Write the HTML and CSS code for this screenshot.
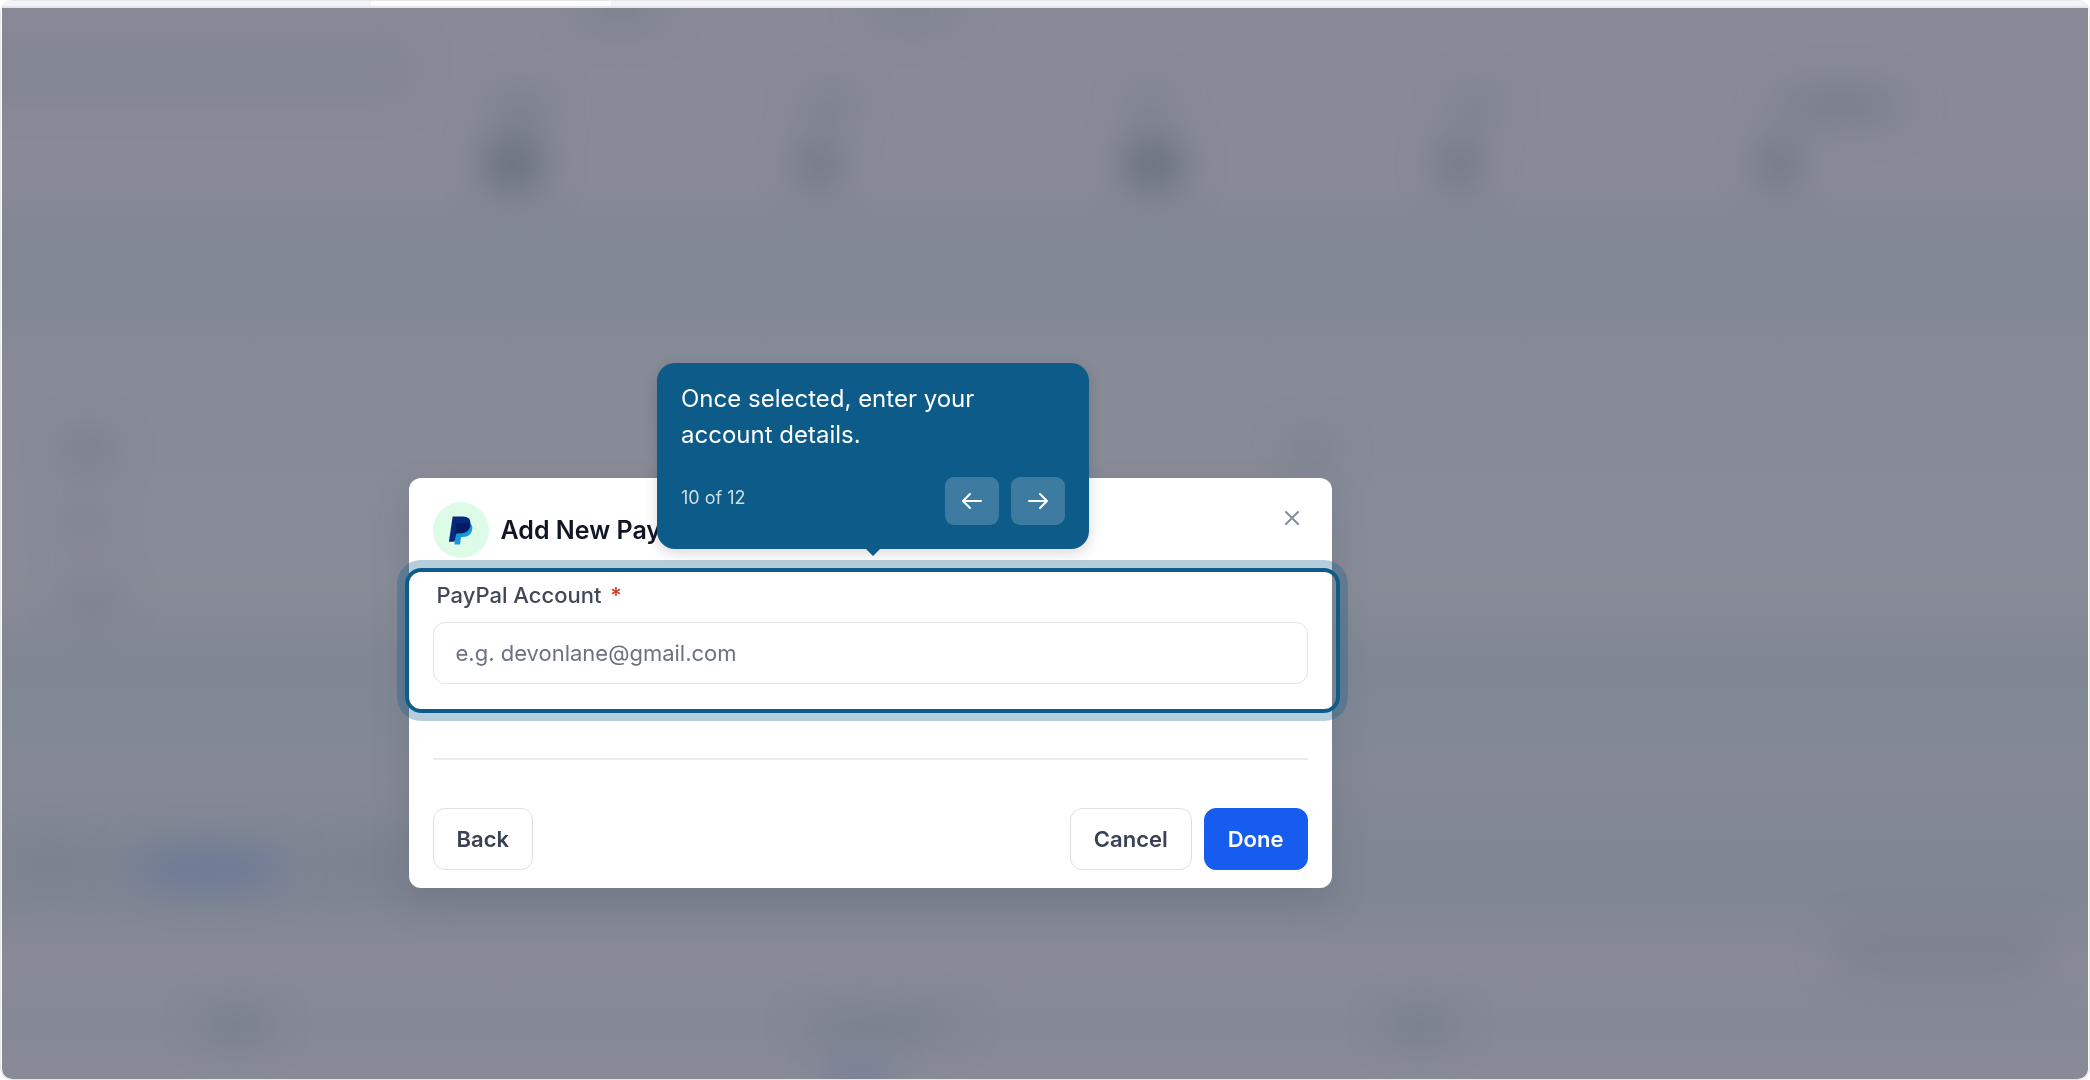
FILE: index.html
```html
<!DOCTYPE html>
<html lang="en">
<head>
    <meta charset="UTF-8">
    <meta name="viewport" content="width=device-width, initial-scale=1.0">
    <title>Add New PayPal Account</title>
    <link rel="stylesheet" href="styles.css">
</head>
<body>
    <div class="frame">
        <div class="tabs"><div class="tab-active"></div></div>
        <main class="stage">
            <!-- blurred page behind the dialog -->
            <svg class="backdrop" viewBox="0 -3 2086 1071" preserveAspectRatio="none" aria-hidden="true">
                <defs>
                    <linearGradient id="bands" x1="0" y1="0" x2="0" y2="1">
                        <stop offset="0" stop-color="#888b97"/>
                        <stop offset="0.16" stop-color="#888b97"/>
                        <stop offset="0.22" stop-color="#818794"/>
                        <stop offset="0.28" stop-color="#828895"/>
                        <stop offset="0.34" stop-color="#878b97"/>
                        <stop offset="0.54" stop-color="#888c97"/>
                        <stop offset="0.61" stop-color="#808693"/>
                        <stop offset="0.66" stop-color="#818895"/>
                        <stop offset="0.72" stop-color="#858996"/>
                        <stop offset="0.79" stop-color="#808693"/>
                        <stop offset="0.83" stop-color="#808693"/>
                        <stop offset="0.89" stop-color="#888b97"/>
                        <stop offset="0.95" stop-color="#848996"/>
                        <stop offset="1" stop-color="#888b97"/>
                    </linearGradient>
                    <filter id="soft" x="-100%" y="-100%" width="300%" height="300%" color-interpolation-filters="sRGB">
                        <feGaussianBlur stdDeviation="20"/>
                    </filter>
                </defs>
                <rect y="-3" width="2086" height="1071" fill="url(#bands)"/>
                <g fill="#5a6474" filter="url(#soft)">
                    <rect x="-40" y="28" width="450" height="60" opacity="0.12"/>
                    <ellipse cx="618" cy="0" rx="50" ry="14" opacity="0.3"/>
                    <ellipse cx="911" cy="0" rx="50" ry="12" opacity="0.3"/>
                    <ellipse cx="520" cy="96" rx="34" ry="16" opacity="0.35"/>
                    <ellipse cx="511" cy="153" rx="30" ry="26" opacity="0.8"/>
                    <ellipse cx="828" cy="92" rx="28" ry="14" opacity="0.35"/>
                    <ellipse cx="816" cy="153" rx="20" ry="26" opacity="0.6"/>
                    <ellipse cx="1148" cy="92" rx="22" ry="14" opacity="0.35"/>
                    <ellipse cx="1151" cy="153" rx="30" ry="26" opacity="0.8"/>
                    <ellipse cx="1474" cy="92" rx="26" ry="14" opacity="0.35"/>
                    <ellipse cx="1457" cy="153" rx="20" ry="26" opacity="0.6"/>
                    <ellipse cx="1838" cy="94" rx="70" ry="16" opacity="0.4"/>
                    <ellipse cx="1776" cy="153" rx="20" ry="26" opacity="0.6"/>
                    <ellipse cx="86" cy="440" rx="28" ry="18" opacity="0.35"/>
                    <ellipse cx="82" cy="512" rx="24" ry="16" opacity="0.25"/>
                    <ellipse cx="90" cy="586" rx="30" ry="16" opacity="0.3"/>
                    <ellipse cx="1310" cy="440" rx="24" ry="16" opacity="0.35"/>
                    <ellipse cx="50" cy="852" rx="50" ry="16" opacity="0.18"/>
                    <ellipse cx="370" cy="852" rx="50" ry="16" opacity="0.18"/>
                    <ellipse cx="234" cy="1014" rx="36" ry="14" opacity="0.4"/>
                    <ellipse cx="880" cy="1014" rx="84" ry="14" opacity="0.3"/>
                    <ellipse cx="1418" cy="1014" rx="36" ry="14" opacity="0.4"/>
                    <rect x="1830" y="920" width="220" height="44" rx="20" opacity="0.24"/>
                </g>
                <g fill="#4e649c" filter="url(#soft)">
                    <ellipse cx="206" cy="857" rx="84" ry="18" opacity="0.46"/>
                    <ellipse cx="855" cy="1068" rx="34" ry="12" opacity="0.5"/>
                </g>
            </svg>

            <form class="modal" onsubmit="return false">
                <div class="modal-header">
                    <span class="logo">
                        <svg width="26" height="31" viewBox="0 0 28 32" aria-hidden="true">
                            <path d="M9 7h12c4 1 6 4 5 8-1 6-5 8-10 8h-2l-1 8H7z" fill="#1597dc"/>
                            <path d="M5 1h11c6 0 9 3 8 9-1 6-5 9-11 9H9l-2 9H1z" fill="#06297a"/>
                            <path d="M9 8h14c1 1 1 2 1 3-1 5-5 8-11 8H9l-1 4z" fill="#061c60"/>
                        </svg>
                    </span>
                    <h1 class="title">Add New PayPal Account</h1>
                    <button type="button" class="close" aria-label="Close">
                        <svg width="14" height="14" viewBox="0 0 14 14" aria-hidden="true">
                            <path d="M1 1l12 12M13 1L1 13" stroke="#868d98" stroke-width="2" stroke-linecap="round"/>
                        </svg>
                    </button>
                </div>

                <div class="field">
                    <label for="paypal">PayPal Account <span class="required">*</span></label>
                    <input type="email" id="paypal" placeholder="e.g. devonlane@gmail.com" required>

                    <div class="spotlight"></div>
                    <div class="tour">
                        <p class="tour-text">Once selected, enter your account details.</p>
                        <div class="tour-footer">
                            <span class="tour-count">10 of 12</span>
                            <button type="button" class="tour-button" aria-label="Previous step">
                                <svg width="20" height="18" viewBox="0 0 20 18" aria-hidden="true">
                                    <path d="M19 9H1M8 2L1 9l7 7"/>
                                </svg>
                            </button>
                            <button type="button" class="tour-button" aria-label="Next step">
                                <svg width="20" height="18" viewBox="0 0 20 18" aria-hidden="true">
                                    <path d="M1 9h18M12 2l7 7-7 7"/>
                                </svg>
                            </button>
                        </div>
                    </div>
                </div>

                <hr class="divider">

                <div class="actions">
                    <button type="button" class="button back">Back</button>
                    <button type="button" class="button">Cancel</button>
                    <button type="submit" class="button primary">Done</button>
                </div>
            </form>
        </main>
    </div>
</body>
</html>
```

FILE: styles.css
```css
* {
    box-sizing: border-box;
}

body {
    margin: 0;
    background-color: #ffffff;
    font-family: Inter, "Liberation Sans", sans-serif;
}

button, input {
    font-family: inherit;
}

.frame {
    display: flex;
    flex-direction: column;
    min-height: 100vh;
    padding: 0 1px;
    border: 1px solid #e5e7eb;
    border-radius: 12px;
    overflow: hidden;
}

.tabs {
    height: 7px;
    background-color: #f3f4f6;
    border-bottom: 2px solid #e3e5ea;
}

.tab-active {
    width: 240px;
    height: 5px;
    margin-left: 369px;
    background-color: #ffffff;
}

.stage {
    position: relative;
    flex: 1;
    display: flex;
    justify-content: center;
    align-items: flex-start;
    padding: 470px 350px 24px 0;
    border-radius: 0 0 10px 10px;
    overflow: hidden;
}

.backdrop {
    position: absolute;
    inset: 0;
    width: 100%;
    height: 100%;
}

/* dialog */
.modal {
    position: relative;
    width: 100%;
    max-width: 923px;
    padding: 24px 24px 18px;
    background-color: #ffffff;
    border-radius: 12px;
    box-shadow: 0 16px 36px rgba(70, 78, 100, 0.24);
}

.modal-header {
    display: flex;
    align-items: center;
    gap: 12px;
}

.logo {
    display: flex;
    align-items: center;
    justify-content: center;
    width: 56px;
    height: 56px;
    border-radius: 50%;
    background-color: #dcfce7;
}

.title {
    flex: 1;
    margin: 0;
    font-size: 25px;
    line-height: 32px;
    font-weight: 600;
    color: #101525;
}

.close {
    display: flex;
    align-self: flex-start;
    padding: 9px;
    background: none;
    border: none;
    cursor: pointer;
}

/* field */
.field {
    position: relative;
    padding: 23px 0 24px;
}

.field label {
    display: block;
    margin-bottom: 13px;
    padding-left: 4px;
    font-size: 22px;
    line-height: 28px;
    font-weight: 500;
    color: #414857;
}

.required {
    margin-left: 3px;
    color: #d13a2c;
}

.field input {
    display: block;
    width: 100%;
    height: 62px;
    padding: 0 22px;
    border: 1px solid #e2e3e6;
    border-radius: 12px;
    background-color: #ffffff;
    font-size: 22px;
    color: #101525;
}

.field input::placeholder {
    color: #6b7280;
    opacity: 1;
}

.divider {
    height: 2px;
    margin: 50px 0 48px;
    border: none;
    background-color: #ececee;
}

.actions {
    display: flex;
    gap: 12px;
}

.button {
    height: 62px;
    padding: 0 23px;
    border: 1px solid #dfe0e4;
    border-radius: 12px;
    background-color: #ffffff;
    font-size: 22px;
    font-weight: 600;
    color: #384254;
    cursor: pointer;
}

.back {
    margin-right: auto;
}

.primary {
    background-color: #165cee;
    border-color: #165cee;
    color: #ffffff;
}

/* product tour */
.spotlight {
    position: absolute;
    inset: 10px -32px -5px -28px;
    border: 4px solid #0d5c8a;
    border-radius: 16px;
    box-shadow: 0 0 0 8px rgba(13, 92, 138, 0.3);
    pointer-events: none;
}

.tour {
    position: absolute;
    bottom: calc(100% + 9px);
    left: calc(50% - 213px);
    width: 432px;
    padding: 18px 24px 24px;
    border-radius: 18px;
    background-color: #0d5b89;
    box-shadow: 0 4px 14px rgba(0, 0, 0, 0.16);
    color: #ffffff;
}

.tour::after {
    content: "";
    position: absolute;
    top: 100%;
    left: calc(50% - 7px);
    border: 7px solid transparent;
    border-top-color: #0d5b89;
    border-bottom: none;
}

.tour-text {
    margin: 0 0 24px;
    font-size: 24px;
    line-height: 36px;
}

.tour-footer {
    display: flex;
    gap: 12px;
}

.tour-count {
    flex: 1;
    font-size: 18px;
    line-height: 42px;
    color: #cfdfe8;
}

.tour-button {
    display: flex;
    align-items: center;
    justify-content: center;
    width: 54px;
    height: 48px;
    padding: 0;
    border: none;
    border-radius: 9px;
    background-color: rgba(255, 255, 255, 0.2);
    cursor: pointer;
}

.tour-button path {
    fill: none;
    stroke: #ffffff;
    stroke-width: 2;
    stroke-linecap: round;
    stroke-linejoin: round;
}
```
